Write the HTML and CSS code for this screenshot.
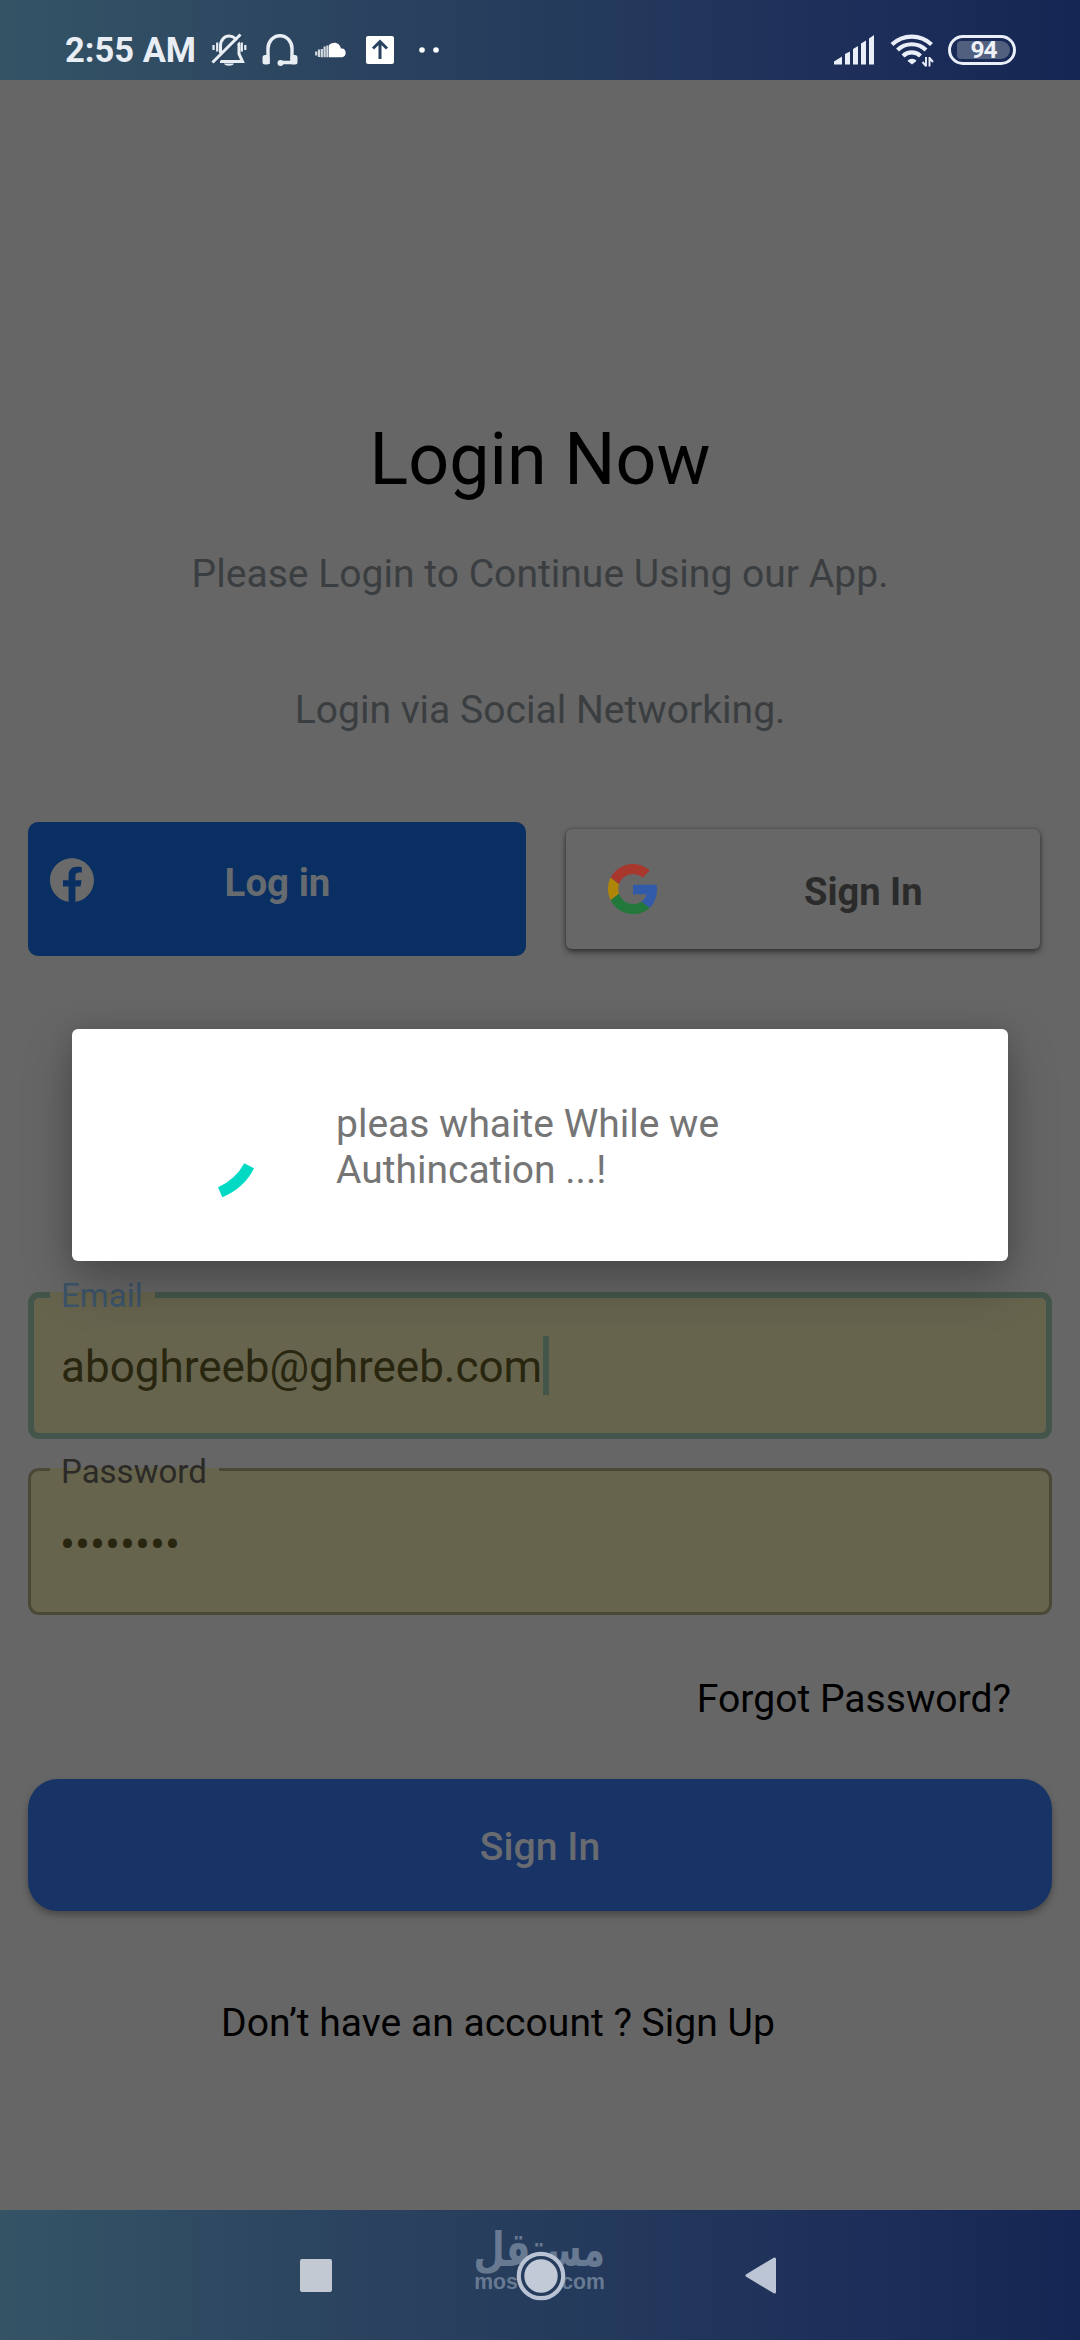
FILE: index.html
```html
<!DOCTYPE html>
<html lang="en">
<head>
<meta charset="utf-8">
<title>Login</title>
<link rel="stylesheet" href="styles.css">
</head>
<body>
<div class="screen">
  <header class="status">
    <span class="clock">2:55 AM</span>
    <svg class="ico-bell" width="36" height="34" viewBox="211 33 36 34" fill="none" stroke="#e9eef5" stroke-width="3">
      <path d="M220.500 53V46c0-6 4-10 8.500-10s10 4 10 10v8l3.500 7.500H220"/>
      <path d="M215 64L243 36" stroke="#2c455f" stroke-width="3"/>
      <path d="M212.500 62.500L240.500 34.500"/>
      <path d="M213.500 45v5M217.200 42.500v9M241.800 42.500v9M245.300 45v5" stroke-width="2.200"/>
      <path d="M224 63.500h10c-1 3-9 3-10 0z" fill="#e9eef5" stroke="none"/>
    </svg>
    <svg class="ico-head" width="36" height="34" viewBox="261.500 33 36 34" fill="none" stroke="#e9eef5" stroke-width="3.400">
      <path d="M267.500 64V48.500a12 12.700 0 0 1 24 0V62.500H280"/>
      <rect x="262" y="55" width="7" height="9.500" rx="2.500" fill="#e9eef5" stroke="none"/>
      <rect x="290" y="55" width="7" height="9.500" rx="2.500" fill="#e9eef5" stroke="none"/>
      <circle cx="280" cy="63" r="3" fill="#e9eef5" stroke="none"/>
    </svg>
    <svg class="ico-cloud" width="32" height="16" viewBox="315 41.500 32 16" fill="#fff">
      <path d="M329 56.800V44.500c5-4.500 11-2 12 3.500 6-1 6.500 8.800 0 8.800z"/>
      <path d="M316.200 51v4M319 49v7.500M321.800 48.500v8.300M324.600 46v10.800M327.400 45v11.800" stroke="#fff" stroke-width="2.200" opacity=".8"/>
    </svg>
    <svg class="ico-up" width="28" height="28" viewBox="0 0 28 28">
      <rect width="28" height="28" rx="2" fill="#fff"/>
      <path d="M14 23V6M7 12.500L14 5.500l7 7" fill="none" stroke="#2b4160" stroke-width="3"/>
    </svg>
    <svg class="ico-dots" width="20" height="6" viewBox="0 0 20 6" fill="#fff"><circle cx="3" cy="3" r="2.800"/><circle cx="17" cy="3" r="2.800"/></svg>
    <svg class="ico-signal" width="41" height="30" viewBox="834 33.500 41 30" fill="#e9eef8">
      <path d="M834 63v-3l8-5v8zM845 63V52.500l5-2.500v13zM853 63V47.500l5-3v18.500zM861 63V42l5-3v24zM869 63V37l5-3.500V63z"/>
    </svg>
    <svg class="ico-wifi" width="44" height="34" viewBox="889.500 33 44 34" fill="none" stroke="#e9eef8" stroke-width="4.200">
      <path d="M891.500 44.500a28.500 28.500 0 0 1 39.500 0M897 50a20.500 20.500 0 0 1 28.500 0M902.500 56a12.500 12.500 0 0 1 17.500 0"/>
      <path d="M907 61c2-3 7-3 9 0l-4.500 3.500z" fill="#e9eef8" stroke="none"/>
      <path d="M925.500 57v9.500M925.500 66l-3.500-4M929 66.500V57M929 58l3.500 4" stroke-width="1.900"/>
    </svg>
    <span class="battery"><span class="level">94</span></span>
  </header>

  <main class="content">
    <h1 class="title">Login Now</h1>
    <p class="lead">Please Login to Continue Using our App.</p>
    <p class="lead via">Login via Social Networking.</p>

    <div class="social">
      <button class="facebook">
        <svg class="fb-logo" width="44" height="44" viewBox="0 0 24 24"><path fill="#6a6a6a" d="M24 12.073C24 5.446 18.627.073 12 .073S0 5.446 0 12.073c0 5.990 4.388 10.954 10.125 11.854v-8.385H7.078v-3.470h3.047V9.430c0-3.007 1.792-4.669 4.533-4.669 1.312 0 2.686.235 2.686.235v2.953H15.830c-1.491 0-1.956.925-1.956 1.874v2.250h3.328l-.532 3.470h-2.796v8.385C19.612 23.027 24 18.062 24 12.073z"/></svg>
        <span class="fb-text">Log in</span>
      </button>
      <button class="google">
        <svg width="50" height="50" viewBox="0 0 48 48">
          <path fill="#a8372d" d="M24 9.500c3.540 0 6.710 1.220 9.210 3.600l6.850-6.850C35.900 2.380 30.470 0 24 0 14.620 0 6.510 5.380 2.560 13.220l7.980 6.190C12.430 13.720 17.740 9.500 24 9.500z"/>
          <path fill="#315aa8" d="M46.980 24.550c0-1.570-.15-3.090-.38-4.550H24v9.020h12.940c-.58 2.960-2.260 5.480-4.780 7.180l7.730 6c4.510-4.180 7.090-10.360 7.090-17.650z"/>
          <path fill="#b08608" d="M10.530 28.590c-.48-1.450-.76-2.990-.76-4.590s.27-3.140.76-4.590l-7.980-6.190C.92 16.460 0 20.120 0 24c0 3.880.92 7.540 2.560 10.780l7.970-6.190z"/>
          <path fill="#22783a" d="M24 48c6.480 0 11.930-2.130 15.890-5.810l-7.730-6c-2.150 1.450-4.920 2.300-8.160 2.300-6.260 0-11.570-4.220-13.470-9.910l-7.980 6.190C6.510 42.620 14.620 48 24 48z"/>
        </svg>
        <span class="g-text">Sign In</span>
      </button>
    </div>

    <fieldset class="field email">
      <legend>Email</legend>
      <div class="value"><span>aboghreeb@ghreeb.com</span><i class="caret"></i></div>
    </fieldset>
    <fieldset class="field password">
      <legend>Password</legend>
      <div class="value">••••••••</div>
    </fieldset>

    <a class="forgot">Forgot Password?</a>
    <button class="signin">Sign In</button>
    <p class="signup">Don’t have an account ? Sign Up</p>
  </main>

  <nav class="navbar">
    <svg width="32" height="33" viewBox="0 0 32 33"><rect width="32" height="33" rx="2" fill="#c2c9d2"/></svg>
    <div class="home">
      <div class="brand"><span class="brand-ar" lang="ar">مستقل</span><span class="brand-en">mostaql.com</span></div>
      <svg class="home-ring" width="50" height="50" viewBox="0 0 50 50"><circle cx="25" cy="25" r="22.200" fill="#263c5d" stroke="#b9c3d3" stroke-width="4.200"/><circle cx="25" cy="25" r="16.700" fill="#c2c9d7"/></svg>
    </div>
    <svg width="31" height="37" viewBox="0 0 31 37"><path d="M2 18.500L29.500 2v33z" fill="#bcc5d5" stroke="#bcc5d5" stroke-width="3" stroke-linejoin="round"/></svg>
  </nav>

  <div class="dialog" role="dialog">
    <svg class="spinner" width="134" height="134" viewBox="-67 -67 134 134"><path d="M46.300 23.300L56 28.300Q46.500 48 24.300 57.300L20 47.300Q37.500 39.500 46.300 23.300z" fill="#00dac5"/></svg>
    <p class="message">pleas whaite While we<br>Authincation ...!</p>
  </div>
</div>
</body>
</html>
```
FILE: styles.css
```css
* { box-sizing: border-box; }
body { margin: 0; font-family: Roboto, "Noto Sans", sans-serif; }
h1, p { margin: 0; font-weight: 400; }
button { border: 0; padding: 0; font-family: inherit; }
svg { display: block; flex: none; }

.screen {
  position: relative;
  width: 1080px;
  height: 2340px;
  display: flex;
  flex-direction: column;
  background: #666;
  overflow: hidden;
}

.status, .navbar {
  flex: none;
  background: linear-gradient(90deg, #345466 0%, #2b435f 32%, #253b5c 52%, #1e305a 76%, #152654 100%);
}
.status {
  height: 80px;
  display: flex;
  align-items: center;
  padding: 19px 64px 0 65px;
}
.clock { width: 146px; font-size: 34.5px; line-height: 40px; font-weight: 700; color: #e9eef5; white-space: nowrap; }
.ico-head { margin-left: 14.5px; }
.ico-cloud { margin-left: 17.5px; }
.ico-up { margin-left: 19px; }
.ico-dots { margin-left: 24.5px; }
.ico-signal { margin-left: auto; }
.ico-wifi { margin-left: 14.5px; }
.battery {
  width: 68px;
  height: 30px;
  margin-left: 14.5px;
  padding: 3px;
  border: 3px solid #e9eef8;
  border-radius: 15px;
}
.level {
  display: block;
  width: 53px;
  margin-left: 3px;
  border-radius: 4px 9px 9px 4px;
  background: #526080;
  color: #eef1f8;
  font-size: 24.5px;
  letter-spacing: -1px;
  font-weight: 700;
  line-height: 18px;
  text-align: center;
}

.content {
  flex: 1;
  display: flex;
  flex-direction: column;
  padding: 0 28px;
  font-size: 39.1px;
  line-height: 46px;
}
.title { margin-top: 338px; font-size: 71.8px; line-height: 84px; text-align: center; color: #000; }
.lead { margin-top: 49px; text-align: center; color: #3b3e41; }
.via { margin-top: 90px; }

.social { display: flex; align-items: center; margin-top: 89px; height: 134px; }
.facebook {
  display: flex;
  align-items: flex-start;
  width: 498px;
  height: 134px;
  padding: 36px 22px;
  border-radius: 10px;
  background: #0a2f62;
}
.fb-text { margin: 2px 43px 0 0; flex: 1; text-align: center; font-size: 38.5px; line-height: 46px; font-weight: 700; color: #666b70; }
.google {
  display: flex;
  align-items: center;
  width: 474px;
  height: 120px;
  margin-left: 40px;
  padding-left: 42px;
  border-radius: 6px;
  background: #676767;
  box-shadow: 0 3px 6px rgba(0, 0, 0, .5), 0 0 3px rgba(0, 0, 0, .25);
}
.g-text { margin: 5px 0 0 146px; font-size: 38.1px; line-height: 46px; font-weight: 700; color: #2b2b2b; }

.field {
  min-width: 0;
  margin: 0;
  border-style: solid;
  border-radius: 11px;
  background: #66644d;
}
.field legend { font-size: 33px; padding: 2px 12px 0 11px; }
.value { display: flex; font-size: 44px; line-height: 59px; color: #292610; }
.email { height: 163px; margin-top: 320px; padding: 22px 16px 0; border-width: 6px; border-color: #44564b; }
.email legend { line-height: 36px; color: #3d546a; }
.email .value { margin-left: 11px; }
.email .value span { padding-top: 2px; }
.caret { width: 6px; height: 59px; margin-left: 1px; background: #44564b; }
.password { height: 165px; margin-top: 11px; padding: 27px 19px 0; border-width: 3px; border-color: #4a4836; }
.field.password legend { line-height: 35px; padding-top: 4px; color: #2b2a26; }
.password .value { margin-left: 10px; font-size: 44.5px; }

.forgot { margin: 61px 41px 0 0; text-align: right; color: #000; }
.signin {
  height: 132px;
  margin-top: 57px;
  padding-top: 3px;
  border-radius: 30px;
  background: #183366;
  box-shadow: 0 4px 7px rgba(0, 0, 0, .3);
  color: #686b70;
  font-size: 39.2px;
  line-height: 46px;
  font-weight: 500;
}
.signup { margin: 89px 0 0 193px; color: #000; }

.navbar {
  height: 130px;
  display: flex;
  align-items: center;
  justify-content: space-between;
  padding: 0 304px 0 300px;
}
.home { position: relative; width: 130px; height: 130px; margin-left: 2px; }
.brand { display: flex; flex-direction: column; align-items: center; width: 130px; padding-top: 14px; color: #687a92; white-space: nowrap; }
.brand-ar { font-family: "DejaVu Sans", sans-serif; font-weight: 700; font-size: 45px; line-height: 52px; height: 46px; transform: scale(.8, 1.05); }
.brand-en { font-family: "Liberation Sans", sans-serif; font-weight: 700; font-size: 21.2px; line-height: 24px; }
.home-ring { position: absolute; left: 41px; top: 40.5px; }

.dialog {
  position: absolute;
  left: 72px;
  top: 1029px;
  width: 936px;
  height: 232px;
  display: flex;
  align-items: center;
  padding-left: 59px;
  border-radius: 6px;
  background: #fff;
  box-shadow: 0 22px 50px rgba(0, 0, 0, .26), 0 0 22px rgba(0, 0, 0, .12);
}
.spinner { margin-top: -10px; }
.message { margin: 3px 0 0 71px; font-size: 39px; line-height: 46px; color: #757575; }
```
